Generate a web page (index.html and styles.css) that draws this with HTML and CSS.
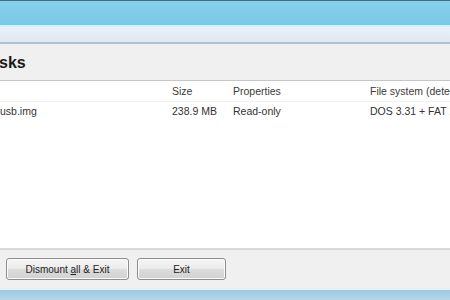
FILE: index.html
```html
<!DOCTYPE html>
<html>
<head>
<meta charset="utf-8">
<link rel="stylesheet" href="styles.css">
</head>
<body>
<div class="window">
  <div class="topline"></div>
  <div class="titlebar"></div>
  <div class="menuband"></div>
  <div class="heading"><h1 class="title">sks</h1></div>
  <div class="list">
    <div class="row head">
      <span class="c name"></span>
      <span class="c size">Size</span>
      <span class="c props">Properties</span>
      <span class="c fs">File system (dete</span>
    </div>
    <div class="row">
      <span class="c name">usb.img</span>
      <span class="c size">238.9 MB</span>
      <span class="c props">Read-only</span>
      <span class="c fs">DOS 3.31 + FAT 1</span>
    </div>
  </div>
  <div class="footer">
    <button class="btn wide">Dismount <u>a</u>ll &amp; Exit</button>
    <button class="btn narrow">Exit</button>
  </div>
  <div class="bottom"></div>
</div>
</body>
</html>
```
FILE: styles.css
```css
html, body {
  margin: 0;
  padding: 0;
  width: 450px;
  height: 300px;
  overflow: hidden;
  background: #f0f0f0;
}
.window {
  display: flex;
  flex-direction: column;
  width: 450px;
  height: 300px;
  font-family: "Liberation Sans", Arial, sans-serif;
  color: #333;
}
.topline {
  height: 1px;
  background: #3d6f82;
}
.titlebar {
  height: 24px;
  background: linear-gradient(#86d0ec, #78c8e7);
  border-bottom: 2px solid #d8eef8;
}
.menuband {
  height: 15px;
  background: linear-gradient(#eaf2f8, #dde8f2);
  border-bottom: 2px solid #b2c2d2;
}
.heading {
  height: 36px;
  display: flex;
  align-items: center;
  background: #f0f0f0;
  border-bottom: 1px solid #c6c6c6;
}
.title {
  margin: 0;
  font-size: 16px;
  font-weight: bold;
  color: #1a1a1a;
  margin-left: -1px;
  margin-top: 1px;
}
.list {
  flex: 1;
  background: #fff;
  border-bottom: 2px solid #d8d8d8;
}
.row {
  display: flex;
  height: 18px;
  align-items: center;
  font-size: 10.5px;
  white-space: nowrap;
}
.row.head {
  height: 20px;
  border-bottom: 1px solid #f0f0f0;
  color: #3a3a3a;
}
.c {
  display: block;
}
.name { width: 172px; }
.size { width: 61px; }
.props { width: 137px; }
.fs { width: 80px; }
.footer {
  height: 38px;
  display: flex;
  align-items: flex-start;
  padding: 8px 0 0 6px;
  box-sizing: border-box;
  gap: 8px;
  background: #f0f0f0;
}
.btn {
  height: 22px;
  font-family: "Liberation Sans", Arial, sans-serif;
  font-size: 10px;
  color: #222;
  border: 1px solid #8e8e8e;
  border-radius: 3px;
  background: linear-gradient(#f6f6f6 0%, #ebebeb 50%, #dddddd 51%, #d0d0d0 100%);
  padding: 0;
  box-shadow: inset 0 0 0 1px #fbfbfb;
}
.btn.wide { width: 123px; }
.btn.narrow { width: 89px; }
.bottom {
  height: 10px;
  border-top: 2px solid #e0f2fa;
  background: linear-gradient(#9fc9e0, #b3d6ea);
}
```
